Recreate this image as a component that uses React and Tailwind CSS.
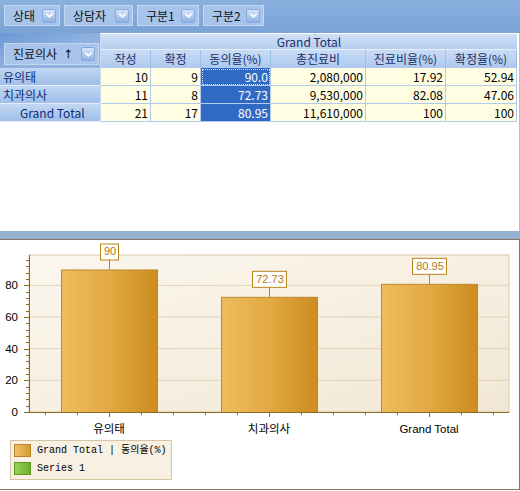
import { ChevronDown } from 'lucide-react';

const columns = [
    { label: '작성', w: 'w-[50px]' },
    { label: '확정', w: 'w-[50px]' },
    { label: '동의율(%)', w: 'w-[70px]', selected: true },
    { label: '총진료비', w: 'w-[95px]' },
    { label: '진료비율(%)', w: 'w-[80px]' },
    { label: '확정율(%)', w: 'w-[71px]' },
];

const rows = [
    { name: '유의태', values: ['10', '9', '90.0', '2,080,000', '17.92', '52.94'], focus: true },
    { name: '치과의사', values: ['11', '8', '72.73', '9,530,000', '82.08', '47.06'] },
    { name: 'Grand Total', values: ['21', '17', '80.95', '11,610,000', '100', '100'], total: true },
];

const bars = [
    { label: '유의태', value: 90, text: '90', cx: 109, boxW: 18 },
    { label: '치과의사', value: 72.73, text: '72.73', cx: 269, boxW: 34 },
    { label: 'Grand Total', value: 80.95, text: '80.95', cx: 429, boxW: 34 },
];

const yOf = (v) => 172 - v * 1.5835;

function DropSquare() {
    return (
        <span className="flex h-[14px] w-[14px] items-center justify-center rounded-[2px] border border-[#86a8dc] bg-linear-to-b from-[#d6e4f8] to-[#8fb1e3]">
            <ChevronDown size={11} strokeWidth={3.5} className="text-white" />
        </span>
    );
}

function FilterButton({ label, width }) {
    return (
        <div
            className={`flex h-[21px] items-center justify-between border border-[#c4d7f2] bg-[#a8c4eb] pl-[8px] pr-[3px] ${width}`}
        >
            <span className="leading-none text-[#111]">{label}</span>
            <DropSquare />
        </div>
    );
}

function Chart() {
    const minor = [];
    for (let v = 0; v <= 96; v += 4) minor.push(v);
    const xticks = [];
    for (let x = 45; x < 509; x += 32) xticks.push(x);

    return (
        <svg width="519" height="198" className="block">
            <defs>
                <linearGradient id="plotBg" x1="0" y1="0" x2="1" y2="1">
                    <stop offset="0" stopColor="#fbf7ef" />
                    <stop offset="1" stopColor="#f2e7d4" />
                </linearGradient>
                <linearGradient id="barFill" x1="0" y1="0" x2="1" y2="0">
                    <stop offset="0" stopColor="#edbc5e" />
                    <stop offset="0.5" stopColor="#e3a942" />
                    <stop offset="1" stopColor="#cc8d20" />
                </linearGradient>
            </defs>

            <rect x="29" y="15" width="480" height="157" fill="url(#plotBg)" stroke="#d9c9a8" />

            {[20, 40, 60, 80].map((v) => (
                <line key={v} x1="29" x2="509" y1={yOf(v)} y2={yOf(v)} stroke="#e1d3b8" />
            ))}

            {bars.map((b) => {
                const top = yOf(b.value);
                return (
                    <g key={b.label}>
                        <rect
                            x={b.cx - 48 + 0.5}
                            y={top + 0.5}
                            width="96"
                            height={172 - top}
                            fill="url(#barFill)"
                            stroke="#b98a2e"
                        />
                        <line x1={b.cx + 0.5} x2={b.cx + 0.5} y1={top - 10} y2={top} stroke="#b8841c" />
                        <rect
                            x={b.cx - b.boxW / 2 + 0.5}
                            y={top - 26 + 0.5}
                            width={b.boxW}
                            height="16"
                            fill="#fff"
                            stroke="#b8841c"
                        />
                        <text
                            x={b.cx + 1}
                            y={top - 14}
                            textAnchor="middle"
                            fontSize="11"
                            fill="#b07a14"
                            fontFamily="'Liberation Sans', sans-serif"
                        >
                            {b.text}
                        </text>
                        <text
                            x={b.cx}
                            y="193"
                            textAnchor="middle"
                            fontSize="11.5"
                            fill="#000"
                            fontFamily="'Liberation Sans', 'Noto Sans CJK KR', sans-serif"
                        >
                            {b.label}
                        </text>
                    </g>
                );
            })}

            <line x1="29.5" x2="29.5" y1="15" y2="172" stroke="#8b6b2a" />
            <line x1="29" x2="509" y1="172.5" y2="172.5" stroke="#8b6b2a" />

            {minor.map((v) => (
                <line
                    key={v}
                    x1={v % 20 === 0 ? 24 : 26}
                    x2="29"
                    y1={Math.round(yOf(v)) + 0.5}
                    y2={Math.round(yOf(v)) + 0.5}
                    stroke="#8b6b2a"
                />
            ))}
            {[0, 20, 40, 60, 80].map((v) => (
                <text
                    key={v}
                    x="18"
                    y={yOf(v) + 4}
                    textAnchor="end"
                    fontSize="11.5"
                    fill="#000"
                    fontFamily="'Liberation Sans', sans-serif"
                >
                    {v}
                </text>
            ))}
            {xticks.map((x) => (
                <line
                    key={x}
                    x1={x + 0.5}
                    x2={x + 0.5}
                    y1="173"
                    y2={(x - 109) % 160 === 0 ? 177 : 175}
                    stroke="#8b6b2a"
                />
            ))}
        </svg>
    );
}

export default function App() {
    return (
        <div className="flex h-[491px] w-[520px] flex-col overflow-hidden bg-white text-[12px] [font-family:'Noto_Sans_CJK_KR',sans-serif]">
            <div className="flex h-[33px] shrink-0 items-start gap-[4px] bg-linear-to-b from-[#8bb0de] to-[#7aa3d7] pl-[4px] pt-[5px]">
                <FilterButton label="상태" width="w-[56px]" />
                <FilterButton label="상담자" width="w-[69px]" />
                <FilterButton label="구분1" width="w-[62px]" />
                <FilterButton label="구분2" width="w-[61px]" />
            </div>

            <div className="h-[198px] w-[520px] shrink-0 border-r border-[#a6c1e8]">
                <div className="flex h-[35px]">
                    <div className="w-[101px] border-r border-[#c9dbf3] bg-linear-to-br from-[#6c98d6] via-[#8db0df] to-[#93b4e1] pl-[4px] pt-[10px]">
                        <div className="flex h-[22px] w-[95px] items-center border border-[#c4d7f2] bg-[#a8c4eb] pl-[8px] pr-[3px]">
                            <span className="leading-none text-[#111]">진료의사</span>
                            <span className="ml-[6px] text-[10px] font-bold leading-none text-[#111]">↑</span>
                            <span className="ml-auto">
                                <DropSquare />
                            </span>
                        </div>
                    </div>
                    <div className="flex w-[416px] flex-col">
                        <div className="flex h-[17px] items-center justify-center border-t border-b border-t-white border-b-[#e4edf9] bg-linear-to-b from-[#cfe0f6] to-[#b6cfee] leading-none text-[#1b2f66]">
                            Grand Total
                        </div>
                        <div className="flex h-[18px]">
                            {columns.map((c) => (
                                <div
                                    key={c.label}
                                    className={`flex items-center justify-center border-r border-[#9ebde6] bg-linear-to-b from-[#c9dcf5] to-[#adc8ed] leading-none text-[#1b2f66] ${c.w}`}
                                >
                                    {c.label}
                                </div>
                            ))}
                        </div>
                    </div>
                </div>

                {rows.map((r) => (
                    <div key={r.name} className="flex h-[18px]">
                        <div
                            className={`flex w-[101px] items-center border-b border-r border-b-[#e3ecf9] border-r-[#c9dbf3] bg-linear-to-b from-[#c2d7f3] to-[#9fbee8] leading-none text-[#0c2c74] ${
                                r.total ? 'pl-[20px]' : 'pl-[3px]'
                            }`}
                        >
                            {r.name}
                        </div>
                        {columns.map((c, i) => (
                            <div
                                key={c.label}
                                className={`flex items-center justify-end border-b border-r border-[#b2cbed] pr-[2px] leading-none ${c.w} ${
                                    c.selected ? 'bg-[#316ac5] text-white' : 'bg-[#fffee3] text-black'
                                } ${
                                    c.selected && r.focus
                                        ? 'outline-1 outline-offset-[-2px] outline-dotted outline-[#d8e2f4]'
                                        : ''
                                }`}
                            >
                                {r.values[i]}
                            </div>
                        ))}
                    </div>
                ))}
            </div>

            <div className="h-[8px] shrink-0 bg-[#94b1d2]" />

            <div className="h-[251px] w-[520px] shrink-0 border-t border-r border-b border-[#857563]">
                <Chart />
                <div className="ml-[10px] mt-[2px] flex h-[40px] w-[162px] flex-col gap-[5px] border border-[#d6c5a2] bg-[#f8f1e3] pl-[3px] pt-[3px] text-[10px] leading-none text-black [font-family:'Liberation_Mono','Noto_Sans_CJK_KR',monospace]">
                    <div className="flex items-center gap-[6px]">
                        <span className="h-[13px] w-[17px] border border-[#b3862c] bg-linear-to-r from-[#efc06a] to-[#d69a2a]" />
                        <span>Grand Total | 동의율(%)</span>
                    </div>
                    <div className="flex items-center gap-[6px]">
                        <span className="h-[13px] w-[17px] border border-[#5e9a22] bg-linear-to-r from-[#9ad254] to-[#6aae2a]" />
                        <span>Series 1</span>
                    </div>
                </div>
            </div>
        </div>
    );
}
